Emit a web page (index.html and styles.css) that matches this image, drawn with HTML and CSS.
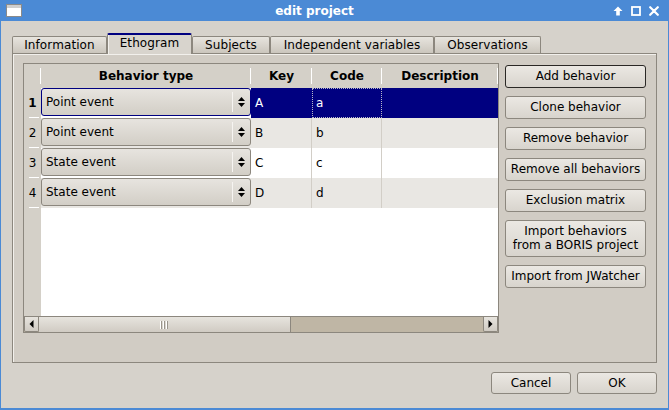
FILE: index.html
```html
<!DOCTYPE html>
<html>
<head>
<meta charset="utf-8">
<title>edit project</title>
<link rel="stylesheet" href="styles.css">
</head>
<body>
<div class="window">
  <div class="titlebar">
    <svg class="app-icon" width="16" height="13" viewBox="0 0 16 13"><rect x="0.5" y="0.5" width="15" height="12" fill="#fff" stroke="#8a8a8a"/><rect x="1" y="1" width="14" height="3" fill="#cfcfcf"/></svg>
    <div class="title">edit project</div>
    <div class="wm">
      <svg width="10" height="10" viewBox="0 0 10 10"><polygon points="5,0.5 9.5,5 6.8,5 6.8,9.5 3.2,9.5 3.2,5 0.5,5" fill="#fff"/></svg>
      <svg width="10" height="10" viewBox="0 0 10 10"><rect x="1" y="1" width="8" height="8" fill="none" stroke="#fff" stroke-width="1.8"/></svg>
      <svg width="10" height="10" viewBox="0 0 10 10"><path d="M1.2 1.2 L8.8 8.8 M8.8 1.2 L1.2 8.8" stroke="#fff" stroke-width="2.2" stroke-linecap="round"/></svg>
    </div>
  </div>
  <div class="body">
    <div class="tabwidget">
      <div class="tabbar">
        <div class="tab tab-info">Information</div>
        <div class="tab active tab-etho">Ethogram</div>
        <div class="tab tab-subj">Subjects</div>
        <div class="tab tab-indep">Independent variables</div>
        <div class="tab tab-obs">Observations</div>
      </div>
      <div class="pane">
        <div class="tableframe">
          <div class="grid">
            <div class="hsec"></div>
            <div class="hsec">Behavior type</div>
            <div class="hsec">Key</div>
            <div class="hsec">Code</div>
            <div class="hsec">Description</div>

            <div class="rh current">1</div>
            <div class="bt"><div class="combo focus"><span class="combo-text">Point event</span><span class="combo-sep"></span><span class="combo-arrow"><svg width="7" height="10" viewBox="0 0 7 10"><polygon points="0,4 3.5,0 7,4" fill="#000"/><polygon points="0,6 3.5,10 7,6" fill="#000"/></svg></span></div></div>
            <div class="cell sel">A</div>
            <div class="cell sel focuscell">a</div>
            <div class="cell sel last"></div>

            <div class="rh">2</div>
            <div class="bt alt"><div class="combo"><span class="combo-text">Point event</span><span class="combo-sep"></span><span class="combo-arrow"><svg width="7" height="10" viewBox="0 0 7 10"><polygon points="0,4 3.5,0 7,4" fill="#000"/><polygon points="0,6 3.5,10 7,6" fill="#000"/></svg></span></div></div>
            <div class="cell alt">B</div>
            <div class="cell alt">b</div>
            <div class="cell alt last"></div>

            <div class="rh">3</div>
            <div class="bt"><div class="combo"><span class="combo-text">State event</span><span class="combo-sep"></span><span class="combo-arrow"><svg width="7" height="10" viewBox="0 0 7 10"><polygon points="0,4 3.5,0 7,4" fill="#000"/><polygon points="0,6 3.5,10 7,6" fill="#000"/></svg></span></div></div>
            <div class="cell">C</div>
            <div class="cell">c</div>
            <div class="cell last"></div>

            <div class="rh">4</div>
            <div class="bt alt"><div class="combo"><span class="combo-text">State event</span><span class="combo-sep"></span><span class="combo-arrow"><svg width="7" height="10" viewBox="0 0 7 10"><polygon points="0,4 3.5,0 7,4" fill="#000"/><polygon points="0,6 3.5,10 7,6" fill="#000"/></svg></span></div></div>
            <div class="cell alt">D</div>
            <div class="cell alt">d</div>
            <div class="cell alt last"></div>

            <div class="vfill"></div>
            <div class="fill"></div>
          </div>
          <div class="hscroll">
            <div class="sb-btn"><svg width="5" height="8" viewBox="0 0 5 8"><polygon points="4.5,0 0.5,4 4.5,8" fill="#000"/></svg></div>
            <div class="slider"><svg width="9" height="8" viewBox="0 0 9 8"><rect x="0" y="0" width="1" height="8" fill="#fff"/><rect x="1" y="0" width="1" height="8" fill="#9a958c"/><rect x="3" y="0" width="1" height="8" fill="#fff"/><rect x="4" y="0" width="1" height="8" fill="#9a958c"/><rect x="6" y="0" width="1" height="8" fill="#fff"/><rect x="7" y="0" width="1" height="8" fill="#9a958c"/></svg></div>
            <div class="trough"></div>
            <div class="sb-btn"><svg width="5" height="8" viewBox="0 0 5 8"><polygon points="0.5,0 4.5,4 0.5,8" fill="#000"/></svg></div>
          </div>
        </div>
        <div class="buttons">
          <div class="btn default">Add behavior</div>
          <div class="btn">Clone behavior</div>
          <div class="btn">Remove behavior</div>
          <div class="btn">Remove all behaviors</div>
          <div class="btn">Exclusion matrix</div>
          <div class="btn two">Import behaviors<br>from a BORIS project</div>
          <div class="btn">Import from JWatcher</div>
        </div>
      </div>
    </div>
    <div class="dialog-buttons">
      <div class="btn dlg">Cancel</div>
      <div class="btn dlg">OK</div>
    </div>
  </div>
</div>
</body>
</html>
```

FILE: styles.css
```css
html, body {
  margin: 0;
  padding: 0;
}
body {
  font-family: "DejaVu Sans", sans-serif;
  font-size: 12px;
  color: #000;
}
.window {
  width: 669px;
  height: 410px;
  display: flex;
  flex-direction: column;
  background: #d6d2cb;
  overflow: hidden;
}
.titlebar {
  flex: none;
  height: 21px;
  background: #4b8ad5;
  display: flex;
  align-items: center;
  color: #fff;
}
.app-icon {
  margin-left: 6px;
  flex: none;
}
.title {
  flex: 1;
  text-align: center;
  font-weight: bold;
  font-size: 12px;
  padding-right: 6px;
}
.wm {
  display: flex;
  gap: 8px;
  margin-right: 10px;
  align-items: center;
}
.wm svg {
  display: block;
}
.body {
  flex: 1;
  display: flex;
  flex-direction: column;
  border: 1px solid #4b8ad5;
  border-top: 0;
  border-bottom-width: 2px;
  padding: 12px 11px 0 11px;
  min-height: 0;
}
.tabbar {
  display: flex;
  height: 20px;
  align-items: flex-end;
}
.tab {
  box-sizing: border-box;
  height: 17px;
  line-height: 16px;
  text-align: center;
  border: 1px solid #8c877e;
  border-bottom: 0;
  border-radius: 2px 2px 0 0;
  background: linear-gradient(#e7e4de, #cbc6bd);
  white-space: nowrap;
  letter-spacing: 0.1px;
}
.tab-info { width: 95px; }
.tab-etho { width: 85px; }
.tab-subj { width: 78px; }
.tab-indep { width: 164px; }
.tab-obs { width: 107px; }
.tab.active {
  height: 21px;
  line-height: 17px;
  margin-bottom: -1px;
  border-top: 2px solid #000080;
  background: #d8d4cd;
  position: relative;
  z-index: 1;
  box-shadow: inset 1px 0 0 #f2f0ec;
}
.pane {
  box-sizing: border-box;
  height: 310px;
  border: 1px solid #8c877e;
  box-shadow: inset 1px 1px 0 #f2f0ec;
  background: #d1ccc4;
  padding: 9px 10px;
  display: flex;
  gap: 6px;
}
.tableframe {
  box-sizing: border-box;
  width: 476px;
  height: 270px;
  border: 1px solid #8c877e;
  background: #fff;
  display: flex;
  flex-direction: column;
  overflow: hidden;
  flex: none;
}
.grid {
  flex: 1;
  display: grid;
  grid-template-columns: 17px 210px 61px 70px 1fr;
  grid-template-rows: 24px repeat(4, 30px) 1fr;
}
.hsec {
  background: linear-gradient(#ffffff, #ffffff) right center / 1px 16px no-repeat, #d4d0c8;
  font-weight: bold;
  text-align: center;
  line-height: 24px;
  white-space: nowrap;
  overflow: hidden;
}
.rh {
  background: linear-gradient(#ffffff, #ffffff) 5px bottom / 10px 1px no-repeat, #d4d0c8;
  text-align: center;
  line-height: 30px;
}
.rh.current {
  font-weight: bold;
}
.bt {
  background: #fff;
  padding-bottom: 2px;
}
.bt.alt {
  background: #e9e7e3;
}
.combo {
  box-sizing: border-box;
  height: 28px;
  border: 1px solid #8c877e;
  border-radius: 3px;
  background: linear-gradient(#e7e4df, #d2cec6);
  display: flex;
  align-items: center;
}
.combo.focus {
  border-color: #000080;
}
.combo-text {
  flex: 1;
  padding-left: 4px;
  white-space: nowrap;
}
.combo-sep {
  width: 1px;
  height: 20px;
  background: #f6f4f1;
}
.combo-arrow {
  width: 17px;
  display: flex;
  justify-content: center;
  align-items: center;
}
.combo-arrow svg {
  display: block;
}
.cell {
  background: #fff;
  border-right: 1px solid #d2cec7;
  padding-left: 4px;
  line-height: 30px;
  white-space: nowrap;
}
.cell.last {
  border-right: 0;
}
.cell.alt {
  background: #e9e7e3;
}
.cell.sel {
  background: #000080;
  color: #fff;
  border-right-color: #000080;
}
.cell.focuscell {
  outline: 1px dotted #b8b8c8;
  outline-offset: -1px;
}
.vfill {
  background: #d4d0c8;
}
.fill {
  grid-column: 2 / -1;
  background: #fff;
}
.hscroll {
  flex: none;
  height: 15px;
  display: flex;
  background: #bfb6a5;
  border-top: 1px solid #8c877e;
}
.sb-btn {
  box-sizing: border-box;
  width: 15px;
  border: 1px solid #8c877e;
  border-top: 0;
  border-radius: 0 0 2px 2px;
  background: linear-gradient(#e7e4de, #d0cbc3);
  display: flex;
  align-items: center;
  justify-content: center;
}
.sb-btn svg {
  display: block;
}
.slider {
  box-sizing: border-box;
  width: 252px;
  border-right: 1px solid #8c877e;
  background: linear-gradient(#e7e4de, #d0cbc3);
  display: flex;
  align-items: center;
  justify-content: center;
}
.slider svg {
  display: block;
}
.trough {
  flex: 1;
}
.buttons {
  flex: 1;
  display: flex;
  flex-direction: column;
  gap: 8px;
  padding-top: 2px;
}
.btn {
  box-sizing: border-box;
  height: 23px;
  border: 1px solid #8c877e;
  border-radius: 3px;
  background: linear-gradient(#ebe8e3, #d8d4cd);
  text-align: center;
  line-height: 21px;
  white-space: nowrap;
}
.btn.default {
  border-color: #2a2825;
}
.btn.two {
  height: 37px;
  line-height: 14px;
  padding-top: 3px;
}
.dialog-buttons {
  display: flex;
  justify-content: flex-end;
  gap: 6px;
  margin-top: 9px;
}
.btn.dlg {
  width: 80px;
  height: 22px;
  line-height: 20px;
}
```
